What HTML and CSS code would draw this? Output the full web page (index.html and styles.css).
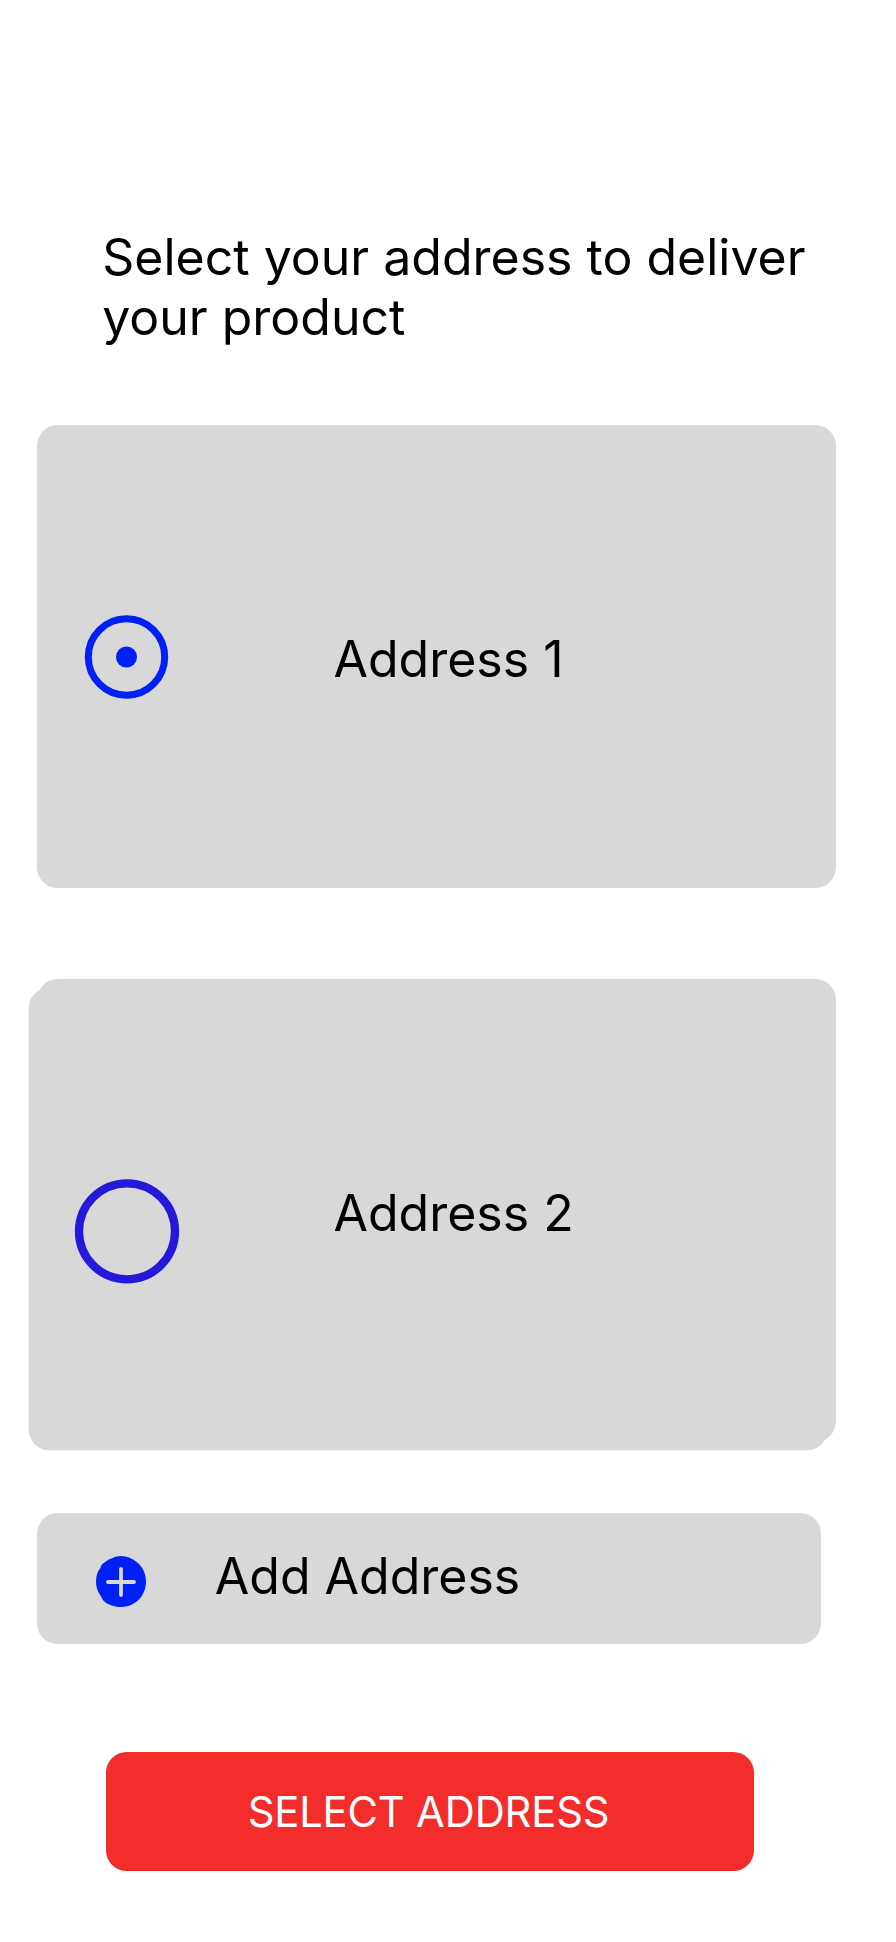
FILE: index.html
```html
<!DOCTYPE html>
<html lang="en">
<head>
<meta charset="utf-8">
<title>Select address</title>
<link rel="stylesheet" href="styles.css">
</head>
<body>
<main class="page">
  <h1 class="heading">Select your address to deliver your product</h1>
  <section class="card">
    <svg class="radio" viewBox="0 0 85 84"><circle cx="42.5" cy="42" r="38.2" fill="none" stroke="#0020f5" stroke-width="7"/><circle cx="42.5" cy="42" r="10.5" fill="#0020f5"/></svg>
    <span class="card-label">Address 1</span>
  </section>
  <section class="card card-stacked">
    <svg class="radio radio-large" viewBox="0 0 106 106"><circle cx="53" cy="53.3" r="48" fill="none" stroke="#2618d9" stroke-width="8.3"/></svg>
    <span class="card-label">Address 2</span>
  </section>
  <section class="add">
    <svg class="plus" viewBox="0 0 50 51"><path d="M25 0C28 0 32 .9 34 2C44 6 50 15 50 25.5C50 40 39 51 25 51C18 51 11 48.5 7 44.2C5.8 42.3 5.7 41 4.2 39.2C1.5 34.8 0 31 0 25.5C0 20 1.7 15 4.4 12C5 9.5 5.8 8.2 7.5 7.2C10 5 13 3 16 2.2C19 .8 22 0 25 0Z" fill="#0020f5"/><path d="M25 13V39M12 26H38" fill="none" stroke="#d8d8d8" stroke-width="3.8" stroke-linecap="round"/></svg>
    <span class="add-label">Add Address</span>
  </section>
  <button class="submit">SELECT ADDRESS</button>
</main>
</body>
</html>
```
FILE: styles.css
```css
* { box-sizing: border-box; }
body {
  margin: 0;
  background: #fff;
  color: #000;
  font-family: Inter, sans-serif;
  font-size: 50px;
  line-height: 60.5px;
}
.page {
  display: flex;
  flex-direction: column;
  align-items: flex-start;
  width: 896px;
  height: 1942px;
  padding: 226.5px 0 0 37.3px;
}
.heading {
  width: 740px;
  margin: 0 0 77.5px 64.9px;
  font-size: inherit;
  font-weight: 400;
}
.card {
  display: grid;
  grid-template-columns: 296.2px 1fr;
  align-items: start;
  width: 798.5px;
  height: 462.6px;
  border-radius: 20.8px;
  background: #d8d8d8;
}
.radio {
  width: 85px;
  height: 84px;
  margin: 189.7px 0 0 46.7px;
}
.card-label { padding-top: 204px; }
.card-stacked {
  margin-top: 91.9px;
  /* second sheet, shifted down and to the left */
  box-shadow: -8.3px 8.3px 0 #d8d8d8;
}
.radio-large {
  width: 106px;
  height: 106px;
  margin: 198.9px 0 0 36.7px;
}
.add {
  display: flex;
  align-items: flex-start;
  width: 783.5px;
  height: 131px;
  margin-top: 70.5px;
  padding: 43.4px 0 0 58.9px;
  border-radius: 20.8px;
  background: #d8d8d8;
}
.plus { width: 50px; height: 51px; }
.add-label { margin: -10px 0 0 68.6px; }
.submit {
  width: 648px;
  height: 119px;
  margin: 108.8px 0 0 69px;
  padding: 1px 3.6px 0 0;
  border: 0;
  border-radius: 20.8px;
  background: #f32c2c;
  color: #fff;
  font: 400 41.7px/50px Inter, sans-serif;
  letter-spacing: -0.15px;
}
```
